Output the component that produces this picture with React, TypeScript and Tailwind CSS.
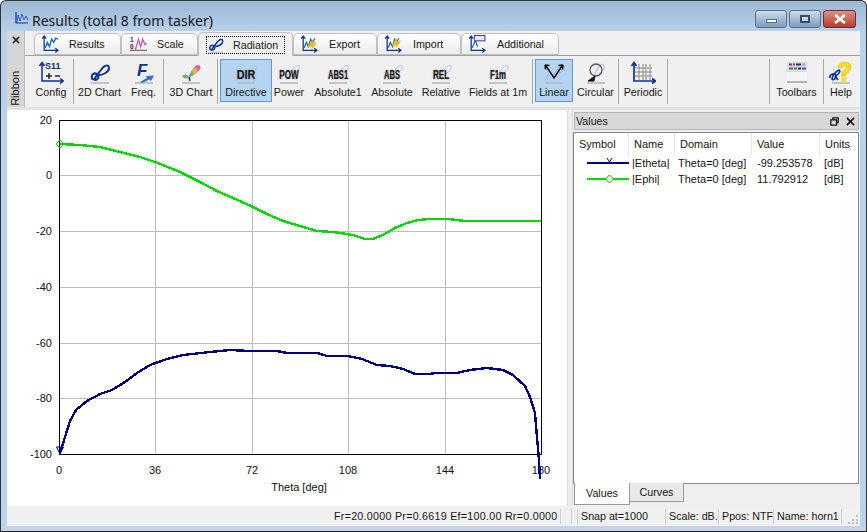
import React from "react";

const BLUE = "#10309a";

function Shadow({ x = 3, w = 18 }: { x?: number; w?: number }) {
  return <rect x={x} y={21} width={w} height={2} fill="#b9b9b9" opacity={0.8} />;
}

function LoopPath({ color = BLUE, width = 2 }: { color?: string; width?: number }) {
  return (
    <path
      d="M5 19 C2 15 5 11 9 13 C12 15 10 19 7 19 C5 19 9 14 13 9 C16 4 21 3 21 7 C21 11 15 14 11 14"
      fill="none"
      stroke={color}
      strokeWidth={width}
    />
  );
}

function IconS11() {
  return (
    <svg width="26" height="24" viewBox="0 0 26 24">
      <path d="M4 2 V20 H25 M1.500 5 L4 1.500 L6.500 5 M22 17.500 L25.500 20 L22 22.500" fill="none" stroke={BLUE} strokeWidth="1.500" />
      <text x="7" y="8" fontFamily="Liberation Sans" fontWeight="700" fontSize="9" fill="#1a2a6a">S11</text>
      <path d="M8 15 H14 M11 12 V18 M17 15 H22" fill="none" stroke="#222" strokeWidth="1.500" />
    </svg>
  );
}
function IconLoop() {
  return (
    <svg width="24" height="24" viewBox="0 0 24 24">
      <Shadow />
      <LoopPath />
    </svg>
  );
}
function IconFreq() {
  return (
    <svg width="24" height="24" viewBox="0 0 24 24">
      <Shadow />
      <text x="5" y="15" fontFamily="Liberation Sans" fontWeight="700" fontStyle="italic" fontSize="17" fill="#10309a">F</text>
      <path d="M8 21 L15 17 L14 15 L22 14.500 L19 20 L17.500 18.500 L10 22 Z" fill="#2f6fd0" />
    </svg>
  );
}
function Icon3D() {
  return (
    <svg width="24" height="24" viewBox="0 0 24 24">
      <defs>
        <linearGradient id="g3d" x1="0" y1="1" x2="1" y2="0">
          <stop offset="0" stopColor="#3c9a78" />
          <stop offset="0.5" stopColor="#d8c060" />
          <stop offset="0.8" stopColor="#e85a90" />
          <stop offset="1" stopColor="#b070e0" />
        </linearGradient>
      </defs>
      <Shadow />
      <path d="M10 15 C12 9 16 3 20 4 C24 6 20 12 11 16 Z" fill="url(#g3d)" />
      <path d="M3 15 C6 12 9 14 10 16 C8 18 5 18 3 15 Z" fill="#70b070" />
      <path d="M10 16 L11 20" stroke={BLUE} strokeWidth="1.500" />
    </svg>
  );
}
function IconWord({ text, cls }: { text: string; cls: string }) {
  return (
    <div className="relative w-[24px] h-[24px]">
      <svg width="24" height="24" viewBox="0 0 24 24" className="block">
        <Shadow />
        <path d="M6 19 C2 15 8 12 12 14 C15 8 20 3 22 5 C24 9 16 14 12 14" fill="none" stroke="#b6bdf0" strokeWidth="1" />
      </svg>
      <span
        className={`absolute left-1/2 top-[7px] -translate-x-1/2 ${cls} font-bold text-[13.500px] leading-none text-[#161616] whitespace-nowrap [text-shadow:0_0_2px_#8a8a8a]`}
      >
        {text}
      </span>
    </div>
  );
}
function IconLinear() {
  return (
    <svg width="24" height="24" viewBox="0 0 24 24">
      <Shadow />
      <path d="M6 19 C2 15 8 12 12 14 C15 8 20 3 22 5 C24 9 16 14 12 14" fill="none" stroke="#a8b2ea" strokeWidth="1" />
      <path d="M4 5 L12 17 L20 5 M3 4 L7.500 4.500 M3 4 L3.500 8.500 M21 4 L16.500 4.500 M21 4 L20.500 8.500" fill="none" stroke="#111" strokeWidth="1.500" />
    </svg>
  );
}
function IconCircular() {
  return (
    <svg width="24" height="24" viewBox="0 0 24 24">
      <Shadow />
      <path d="M10 16 C17 12 22 7 20 4 C17 1 12 8 10 16" fill="none" stroke="#aab2ee" strokeWidth="1" />
      <circle cx="12" cy="9" r="6" fill="none" stroke="#555" strokeWidth="1.300" />
      <path d="M4 20 L11 15 L10 20 Z" stroke="#111" fill="#111" strokeWidth="1" />
    </svg>
  );
}
function IconPeriodic() {
  return (
    <svg width="26" height="24" viewBox="0 0 26 24">
      <path d="M9 3 V19 M13 3 V19 M16 3 V19 M20 3 V19 M5 7 H22 M5 11 H22 M5 15 H22" stroke="#8a8a8a" strokeWidth="1" />
      <path d="M4 2 V20 H25 M1.500 5 L4 1.500 L6.500 5 M22 17.500 L25.500 20 L22 22.500" fill="none" stroke={BLUE} strokeWidth="1.700" />
    </svg>
  );
}
function IconToolbars() {
  return (
    <svg width="24" height="24" viewBox="0 0 24 24">
      <rect x="2" y="1" width="20" height="21" fill="#f4f4f4" />
      <rect x="2" y="1" width="20" height="10" fill="#dcdce0" />
      <path d="M4 3.500 H7 M8 3.500 H10" stroke="#8a2b8a" strokeWidth="2" />
      <path d="M11 3.500 H16" stroke="#2a2a60" strokeWidth="2" />
      <path d="M17 3.500 H20" stroke="#a0a0e0" strokeWidth="2" />
      <path d="M4 7.500 H8" stroke="#2a7a5a" strokeWidth="2" />
      <path d="M9 7.500 H12" stroke="#806a2a" strokeWidth="2" />
      <path d="M13 7.500 H16" stroke="#303080" strokeWidth="2" />
      <path d="M17 7.500 H21" stroke="#3a60d0" strokeWidth="2" />
      <rect x="2" y="20" width="20" height="2" fill="#b4b4b4" />
    </svg>
  );
}
function IconHelp() {
  return (
    <svg width="24" height="24" viewBox="0 0 24 24">
      <Shadow />
      <path d="M9 6 C9 0 22 -1 22 6 C22 11 17 11 17 15 H12.500 C12 9 17.500 9 17.500 6 C17.500 4 14 4 13.500 7 Z" fill="#f8dc20" stroke="#d8b010" strokeWidth="0.500" />
      <rect x="12.500" y="16.500" width="4.500" height="4" fill="#f8dc20" />
      <path d="M1 17 C0 13 5 12 7 14 C8 17 4 20 3 18 C3 15 7 10 10 9 C12 9 10 14 6 15 M6 15 L9 19" fill="none" stroke={BLUE} strokeWidth="1.700" />
    </svg>
  );
}

function TabAxes({ children }: { children?: React.ReactNode }) {
  return (
    <svg width="18" height="18" viewBox="0 0 17 17" className="shrink-0">
      {children}
      <path d="M3 1 V14.500 H16 M1 3.500 L3 1 L5 3.500 M13.500 12.500 L16 14.500 L13.500 16.500" fill="none" stroke={BLUE} strokeWidth="1.200" />
    </svg>
  );
}
const TabIcons: Record<string, React.ReactNode> = {
  Results: (
    <TabAxes>
      <path d="M4 12 L6 7 L8 11 L10 4 L12 7 L14 3 L16 4" fill="none" stroke="#1d6fb0" strokeWidth="1.300" />
    </TabAxes>
  ),
  Scale: (
    <svg width="18" height="18" viewBox="0 0 17 17" className="shrink-0">
      <path d="M5 14 L8 4 L10 11 L12 4 L14 9 L16 8" fill="none" stroke="#d050b0" strokeWidth="1.200" />
      <path d="M0 14.500 H16" stroke="#777" strokeWidth="1" />
      <text x="0" y="7" fontSize="6" fontFamily="Liberation Sans" fontWeight="700" fill="#10309a">1</text>
      <text x="0" y="13" fontSize="6" fontFamily="Liberation Sans" fontWeight="700" fill="#222">0</text>
    </svg>
  ),
  Radiation: (
    <svg width="18" height="18" viewBox="0 0 24 24" className="shrink-0">
      <Shadow />
      <LoopPath />
    </svg>
  ),
  Export: (
    <TabAxes>
      <path d="M4 12 L6 7 L8 11 L10 4 L12 7 L14 3" fill="none" stroke="#1d6fb0" strokeWidth="1.200" />
      <path d="M7 11 L12 4 L12 7 L16 7 L11 14 L11 11 Z" fill="#f2b81c" />
    </TabAxes>
  ),
  Import: (
    <TabAxes>
      <path d="M4 12 L6 7 L8 11 L10 4 L12 7 L14 3" fill="none" stroke="#1d6fb0" strokeWidth="1.200" />
      <path d="M16 6 L11 13 L11 10 L7 10 L12 3 L12 6 Z" fill="#f2b81c" />
    </TabAxes>
  ),
  Additional: (
    <TabAxes>
      <path d="M4 12 L7 5 L9 11" fill="none" stroke="#1d6fb0" strokeWidth="1.200" />
      <rect x="6" y="0.500" width="10" height="5" fill="#ece8f8" stroke="#4a3ab0" strokeWidth="1" />
    </TabAxes>
  ),
};

const tabs = [
  { label: "Results", cls: "w-[87px]", gap: "gap-[10px] pl-[6px]" },
  { label: "Scale", cls: "w-[77px]", gap: "gap-[9px] pl-[8px]" },
  { label: "Radiation", cls: "w-[95px]", gap: "gap-[10px] pl-[7px]", active: true },
  { label: "Export", cls: "w-[84px]", gap: "gap-[11px] pl-[6px]" },
  { label: "Import", cls: "w-[84px]", gap: "gap-[11px] pl-[6px]" },
  { label: "Additional", cls: "w-[98px]", gap: "gap-[11px] pl-[6px]" },
];

function Tool({ label, cls, icon, active }: { label: string; cls: string; icon: React.ReactNode; active?: boolean }) {
  return (
    <div
      className={`${cls} h-[43px] shrink-0 flex flex-col items-center ${
        active ? "bg-[#b4d4f2] border border-[#5d9cd8]" : "border border-transparent"
      }`}
    >
      <div className="h-[25px] flex items-center justify-center">{icon}</div>
      <div className="text-[10.700px] leading-[14px] whitespace-nowrap text-[#161616]">{label}</div>
    </div>
  );
}

function Sep({ cls = "" }: { cls?: string }) {
  return <div className={`w-[1px] h-[45px] bg-[#a8a8a8] shrink-0 ${cls}`} />;
}

const pts = (a: number[][]) => a.map((p) => p.join(",")).join(" ");

const green = [
  [60, 144], [80, 145], [100, 147], [120, 152], [140, 157], [155, 162], [180, 172], [200, 182], [217, 191],
  [233, 198], [251, 206], [267, 214], [283, 221], [300, 226], [317, 231], [333, 232], [340, 233], [353, 235],
  [365, 239], [373, 239], [383, 235], [395, 228], [407, 223], [418, 220], [430, 219], [448, 219], [465, 221], [541, 221],
];
const blue = [
  [60, 453], [65, 437], [70, 421], [76, 410], [87, 401], [100, 394], [112, 390], [125, 382], [137, 373], [150, 365],
  [167, 359], [183, 355], [210, 352], [230, 350], [250, 351], [277, 351], [287, 353], [317, 353], [327, 356], [348, 356],
  [362, 359], [377, 365], [390, 366], [403, 369], [415, 374], [430, 374], [435, 373], [445, 373], [457, 373], [470, 370],
  [487, 368], [503, 370], [513, 375], [525, 386], [530, 397], [535, 413], [537, 437], [539, 460], [540, 479],
];

function Chart() {
  const ys: [number, string][] = [[120, "20"], [175, "0"], [231, "-20"], [287, "-40"], [343, "-60"], [398, "-80"], [454, "-100"]];
  const xs: [number, string][] = [[59, "0"], [155, "36"], [252, "72"], [348, "108"], [445, "144"], [541, "180"]];
  return (
    <svg viewBox="7 110 560 396" width="560" height="396" className="block bg-white shrink-0" fontFamily="Liberation Sans" fontSize="11" fill="#111">
      <g shapeRendering="crispEdges">
        {xs.slice(1, 5).map(([x]) => (
          <line key={x} x1={x + 0.5} x2={x + 0.5} y1={120} y2={454} stroke="#bdbdbd" />
        ))}
        {ys.slice(1, 6).map(([y]) => (
          <line key={y} x1={59} x2={541} y1={y + 0.5} y2={y + 0.5} stroke="#bdbdbd" />
        ))}
        <rect x="59.500" y="120.500" width="482" height="334" fill="none" stroke="#000" />
      </g>
      {ys.map(([y, t]) => (
        <text key={t} x={52} y={y + 4} textAnchor="end">{t}</text>
      ))}
      {xs.map(([x, t]) => (
        <text key={t} x={x} y={474} textAnchor="middle">{t}</text>
      ))}
      <text x={299} y={491} textAnchor="middle">Theta [deg]</text>
      <polyline points={pts(green)} fill="none" stroke="#00d800" strokeWidth="2.400" shapeRendering="crispEdges" />
      <polyline points={pts(blue)} fill="none" stroke="#000080" strokeWidth="2.400" shapeRendering="crispEdges" />
      <path d="M60 140 L64 144 L60 148 L56 144 Z" fill="none" stroke="#00c000" strokeWidth="1" />
      <path d="M56.500 447 H63.500 L60 454 Z" fill="none" stroke="#000080" strokeWidth="1" />
    </svg>
  );
}

function WinBtn({ cls, children }: { cls: string; children: React.ReactNode }) {
  return <div className={`${cls} h-[18px] rounded-[3px] border flex items-center justify-center`}>{children}</div>;
}

export default function App() {
  const gridCols = "grid grid-cols-[55px_46px_77px_68px_1fr]";
  return (
    <div
      className="w-[867px] h-[532px] overflow-hidden flex flex-col border-t border-x border-[#333] rounded-t-[6px] bg-gradient-to-b from-[#9db6d2] to-[#b9d2ee] to-[6%]"
      style={{ fontFamily: '"Liberation Sans", Arial, sans-serif' }}
    >
      {/* title bar */}
      <div className="h-[30px] shrink-0 flex items-start pt-[9px] pl-[12px] pr-[10px]">
        <svg width="16" height="14" viewBox="0 0 16 14" className="shrink-0 mt-[2px]">
          <path d="M3 0 V11 H15" fill="none" stroke="#10309a" strokeWidth="1.200" />
          <path d="M4 10 L5 3 L7 9 L9 2 L11 8 L13 4 L15 8" fill="none" stroke="#3060c0" strokeWidth="1" />
        </svg>
        <div className="ml-[3px] text-[14px] text-[#161616] leading-[22px]" style={{ fontFamily: '"Noto Sans", sans-serif' }}>
          Results (total 8 from tasker)
        </div>
        <div className="ml-auto flex gap-[2px]">
          <WinBtn cls="w-[32px] bg-gradient-to-b from-[#cfdcec] to-[#7e9cc0] border-[#5f6f88]">
            <div className="w-[11px] h-[4px] mt-[3px] bg-white border border-[#5a6a80]" />
          </WinBtn>
          <WinBtn cls="w-[32px] bg-gradient-to-b from-[#cfdcec] to-[#7e9cc0] border-[#5f6f88]">
            <div className="w-[10px] h-[8px] border-[2px] border-[#3c4a60] bg-white/40" />
          </WinBtn>
          <WinBtn cls="w-[33px] bg-gradient-to-b from-[#dc9088] to-[#b83a2c] border-[#6a3030]">
            <svg width="14" height="10" viewBox="0 0 14 10">
              <path d="M2 1 L12 9 M12 1 L2 9" stroke="#fff" strokeWidth="2.600" />
            </svg>
          </WinBtn>
        </div>
      </div>

      <div className="flex-1 mx-[6px] flex flex-col min-h-0">
        {/* ribbon */}
        <div className="h-[76px] shrink-0 flex bg-[#f0f0f0]">
          <div className="w-[18px] shrink-0 bg-[#d6d6d6] border-r border-[#bcbcbc] flex flex-col items-center">
            <svg width="10" height="10" viewBox="0 0 10 10" className="mt-[4px]">
              <path d="M2 2 L8 8 M8 2 L2 8" stroke="#111" strokeWidth="1.600" />
            </svg>
            <div className="mt-auto mb-[1px] text-[11px] leading-none text-[#111] [writing-mode:vertical-rl] rotate-180 pb-[4px]">Ribbon</div>
          </div>
          <div className="flex-1 min-w-0 flex flex-col">
            <div className="h-[25px] shrink-0 pl-[9px] flex items-end border-b border-[#a0a0a0]">
              {tabs.map((t) => (
                <div
                  key={t.label}
                  className={`${t.cls} ${
                    t.active ? "h-[24px] -mb-[1px] bg-[#f0f0f0] border-b-0 pt-[1px]" : `${t.gap} h-[22px] bg-gradient-to-b from-white to-[#ececec]`
                  } shrink-0 flex items-center border border-[#c0c0c0] rounded-t-[5px]`}
                >
                  {t.active ? (
                    <div className="ml-[8px] h-[16px] w-[77px] flex items-center gap-[8px] outline-1 outline-dotted outline-black">
                      {TabIcons[t.label]}
                      <span className="text-[10.700px] leading-[13px] text-[#161616]">{t.label}</span>
                    </div>
                  ) : (
                    <>
                      {TabIcons[t.label]}
                      <span className="text-[10.700px] leading-[13px] text-[#161616]">{t.label}</span>
                    </>
                  )}
                </div>
              ))}
            </div>
            <div className="flex-1 flex items-start pt-[3px]">
              <div className="flex items-start w-full">
                <Tool label="Config" cls="ml-[4px] w-[44px]" icon={<IconS11 />} />
                <Sep />
                <Tool label="2D Chart" cls="ml-[1px] w-[49px]" icon={<IconLoop />} />
                <Tool label="Freq." cls="w-[39px]" icon={<IconFreq />} />
                <Sep />
                <Tool label="3D Chart" cls="ml-[1px] w-[52px]" icon={<Icon3D />} />
                <Sep />
                <Tool label="Directive" cls="ml-[2px] w-[52px]" icon={<IconWord text="DIR" cls="scale-x-[0.8]" />} active />
                <Tool label="Power" cls="w-[34px]" icon={<IconWord text="POW" cls="scale-x-[0.6]" />} />
                <Tool label="Absolute1" cls="w-[64px]" icon={<IconWord text="ABS1" cls="scale-x-[0.56]" />} />
                <Tool label="Absolute" cls="w-[44px]" icon={<IconWord text="ABS" cls="scale-x-[0.56]" />} />
                <Tool label="Relative" cls="w-[54px]" icon={<IconWord text="REL" cls="scale-x-[0.6]" />} />
                <Tool label="Fields at 1m" cls="w-[60px]" icon={<IconWord text="F1m" cls="scale-x-[0.58]" />} />
                <Sep cls="ml-[4px]" />
                <Tool label="Linear" cls="ml-[2px] w-[38px]" icon={<IconLinear />} active />
                <Tool label="Circular" cls="w-[45px]" icon={<IconCircular />} />
                <Sep />
                <Tool label="Periodic" cls="w-[48px]" icon={<IconPeriodic />} />
                <Sep />
                <div className="flex-1" />
                <Sep />
                <Tool label="Toolbars" cls="w-[53px]" icon={<IconToolbars />} />
                <Sep />
                <Tool label="Help" cls="w-[34px] mr-[2px]" icon={<IconHelp />} />
              </div>
            </div>
          </div>
        </div>
        <div className="h-[3px] shrink-0 bg-[#e2e2e2]" />

        {/* main */}
        <div className="h-[396px] shrink-0 flex">
          <Chart />
          <div className="w-[6px] shrink-0 bg-[#eeeeee] border-x border-[#dcdcdc]" />
          <div className="flex-1 min-w-0 flex flex-col bg-[#efefef] pt-[2px]">
            <div className="h-[18px] shrink-0 mx-[1px] bg-[#d8d8d8] border border-[#b4b4b4] flex items-center pl-[1px] pr-[3px] text-[10.700px] text-[#161616]">
              <span>Values</span>
              <svg width="9" height="9" viewBox="0 0 11 11" className="ml-auto">
                <path d="M3.500 3 V1 H10 V7 H8 M1 3.500 H8 V10 H1 Z" fill="none" stroke="#111" strokeWidth="1.500" />
              </svg>
              <svg width="9" height="9" viewBox="0 0 10 10" className="ml-[7px]">
                <path d="M1 1 L9 9 M9 1 L1 9" stroke="#111" strokeWidth="1.800" />
              </svg>
            </div>
            <div className="flex-1 mt-[2px] mr-[1px] bg-white border border-[#8a8a8a] text-[11px] text-[#161616]">
              <div className={`${gridCols} h-[22px] items-center`}>
                <div className="pl-[5px] h-full flex items-center border-r border-[#e4e8ee]">Symbol</div>
                <div className="pl-[5px] h-full flex items-center border-r border-[#e4e8ee]">Name</div>
                <div className="pl-[5px] h-full flex items-center border-r border-[#e4e8ee]">Domain</div>
                <div className="pl-[5px] h-full flex items-center border-r border-[#e4e8ee]">Value</div>
                <div className="pl-[5px] h-full flex items-center">Units</div>
              </div>
              <div className={`${gridCols} h-[16px] items-center`}>
                <svg width="55" height="16" viewBox="0 0 55 16" className="block">
                  <line x1="13" x2="55" y1="8" y2="8" stroke="#000080" strokeWidth="2" shapeRendering="crispEdges" />
                  <path d="M33 3 L35.500 7 L38 3" fill="none" stroke="#000080" strokeWidth="1" />
                </svg>
                <div className="pl-[3px]">|Etheta|</div>
                <div className="pl-[3px]">Theta=0 [deg]</div>
                <div className="pl-[5px]">-99.253578</div>
                <div className="pl-[4px]">[dB]</div>
              </div>
              <div className={`${gridCols} h-[16px] items-center`}>
                <svg width="55" height="16" viewBox="0 0 55 16" className="block">
                  <line x1="13" x2="55" y1="8" y2="8" stroke="#00d800" strokeWidth="2" shapeRendering="crispEdges" />
                  <path d="M35.500 4 L39.500 8 L35.500 12 L31.500 8 Z" fill="#fff" stroke="#00b000" strokeWidth="1" />
                </svg>
                <div className="pl-[3px]">|Ephi|</div>
                <div className="pl-[3px]">Theta=0 [deg]</div>
                <div className="pl-[5px]">11.792912</div>
                <div className="pl-[4px]">[dB]</div>
              </div>
            </div>
            <div className="h-[22px] shrink-0 flex items-start text-[10.700px] text-[#161616]">
              <div className="ml-[1px] w-[56px] h-[22px] -mt-[1px] bg-white border border-t-0 border-[#9a9a9a] flex items-center justify-center">Values</div>
              <div className="w-[54px] h-[19px] -mt-[1px] bg-[#e8e8e8] border border-l-0 border-t-0 border-[#9a9a9a] flex items-center justify-center">Curves</div>
            </div>
          </div>
        </div>

        {/* status bar */}
        <div className="h-[20px] shrink-0 bg-[#f0f0f0] flex items-center text-[10.700px] text-[#161616]">
          <div className="w-[553px] shrink-0 pl-[327px] whitespace-nowrap h-full flex items-center tracking-[0.27px]">Fr=20.0000 Pr=0.6619 Ef=100.00 Rr=0.0000</div>
          <div className="w-[1px] h-[15px] bg-[#d0d0d0] shrink-0" />
          <div className="w-[10px] shrink-0" />
          <div className="w-[1px] h-[15px] bg-[#d0d0d0] shrink-0" />
          <div className="w-[5px] shrink-0" />
          <div className="w-[1px] h-[15px] bg-[#d0d0d0] shrink-0" />
          <div className="w-[87px] pl-[3px] shrink-0">Snap at=1000</div>
          <div className="w-[1px] h-[15px] bg-[#d0d0d0] shrink-0" />
          <div className="w-[52px] pl-[3px] shrink-0 whitespace-nowrap">Scale: dB.</div>
          <div className="w-[1px] h-[15px] bg-[#d0d0d0] shrink-0" />
          <div className="w-[54px] pl-[3px] shrink-0 whitespace-nowrap">Ppos: NTF</div>
          <div className="w-[1px] h-[15px] bg-[#d0d0d0] shrink-0" />
          <div className="w-[67px] pl-[3px] shrink-0 whitespace-nowrap">Name: horn1</div>
          <div className="w-[1px] h-[15px] bg-[#d0d0d0] shrink-0" />
          <svg width="10" height="10" viewBox="0 0 10 10" className="ml-auto mr-[2px] self-end mb-[2px]">
            <path d="M8 1 h2 v2 h-2 Z M4 5 h2 v2 h-2 Z M8 5 h2 v2 h-2 Z M0 8 h2 v2 h-2 Z M4 8 h2 v2 h-2 Z M8 8 h2 v2 h-2 Z" fill="#c0c0c0" />
          </svg>
        </div>
      </div>
      <div className="h-[6px] shrink-0 border-b border-[#222] bg-[#c5d2e8]" />
    </div>
  );
}
